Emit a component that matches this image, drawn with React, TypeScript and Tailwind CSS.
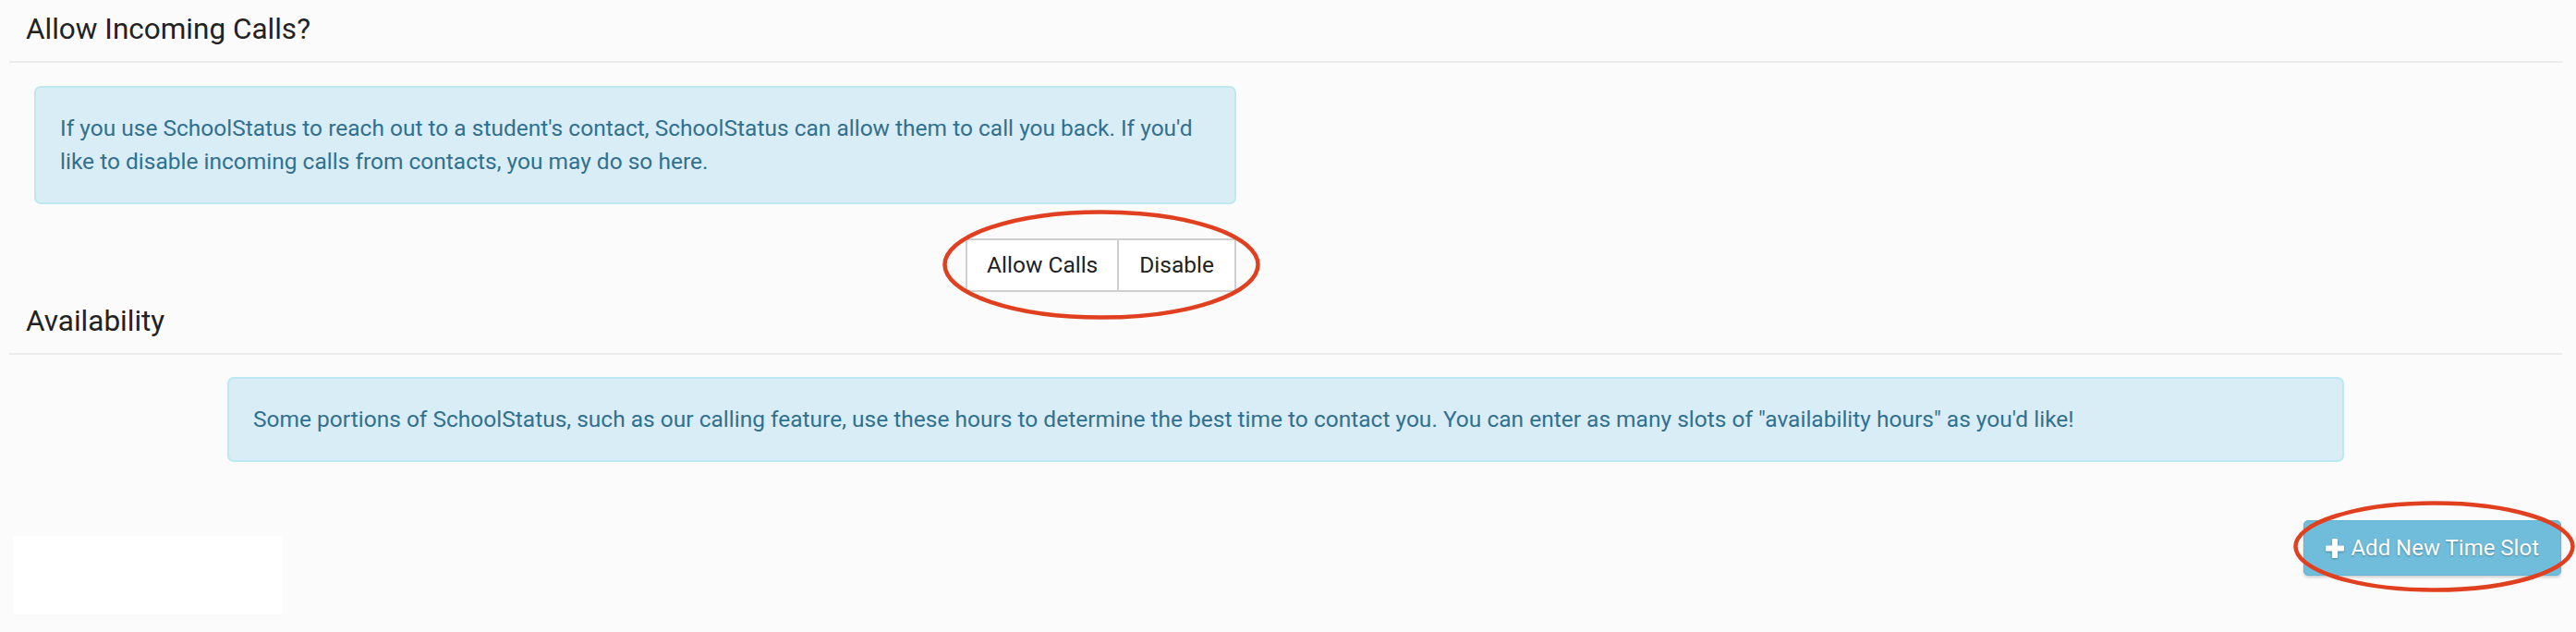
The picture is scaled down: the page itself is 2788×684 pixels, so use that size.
import React from "react";

const Ring = ({ className, w, h }: { className: string; w: number; h: number }) => (
  <svg
    className={"absolute pointer-events-none " + className}
    width={w}
    height={h}
    viewBox={`0 0 ${w} ${h}`}
  >
    <ellipse
      cx={w / 2}
      cy={h / 2}
      rx={w / 2 - 2.5}
      ry={h / 2 - 2.5}
      fill="none"
      stroke="#e0401f"
      strokeWidth="4.5"
    />
  </svg>
);

const Heading = ({ children, className = "" }: { children: React.ReactNode; className?: string }) => (
  <h2
    className={
      "pl-[18px] pb-[17px] border-b-2 border-[#ececec] text-[31.5px] leading-[35px] text-[#222] " +
      className
    }
  >
    {children}
  </h2>
);

const App = () => {
  return (
    <div className="h-[684px] bg-[#fbfbfb] font-['Roboto',sans-serif] pl-[10px] pr-[15px] overflow-hidden">
      <Heading className="pt-[14px]">Allow Incoming Calls?</Heading>

      <div className="pl-[27px] mt-[25px] w-[1328px]">
        <div className="rounded-[7px] border-2 border-[#bce8f1] bg-[#d9edf7] p-[26px] text-[24.5px] leading-[36px] text-[#31708f]">
          If you use SchoolStatus to reach out to a student's contact, SchoolStatus can allow them to call you
          back. If you'd
          <br />
          like to disable incoming calls from contacts, you may do so here.
        </div>

        <div className="mt-[37px] flex justify-end">
          <div className="relative flex h-[58px] text-[24.5px] text-[#222]">
            <button className="bg-white border-2 border-[#cfcfcf] rounded-l-[2px] px-[21px]">Allow Calls</button>
            <button className="bg-white border-2 border-l-0 border-[#cfcfcf] rounded-r-[2px] px-[22px]">
              Disable
            </button>
            <Ring className="-left-[25px] -top-[31px]" w={344} h={119} />
          </div>
        </div>
      </div>

      <Heading className="mt-[14px]">Availability</Heading>

      <div className="mt-[24px] mx-auto w-[2291px] rounded-[7px] border-2 border-[#bce8f1] bg-[#d9edf7] p-[26px] text-[24.5px] leading-[36px] text-[#31708f]">
        Some portions of SchoolStatus, such as our calling feature, use these hours to determine the best time to
        contact you. You can enter as many slots of "availability hours" as you'd like!
      </div>

      <div className="mt-[63px] flex justify-between items-start">
        <div className="ml-[4px] mt-[17px] w-[291px] h-[85px] bg-white" />
        <div className="relative mr-[1px]">
          <button className="flex items-center gap-[7px] h-[60px] px-[23px] rounded-[5px] bg-[#6fbddb] border border-[#62b3d4] text-white text-[24px] shadow-[0_2px_3px_rgba(0,0,0,0.18)] [text-shadow:0_1px_2px_rgba(0,0,0,0.3)]">
            <svg width="20" height="21" viewBox="0 0 20 21" className="drop-shadow-[0_1px_1px_rgba(0,0,0,0.3)]">
              <rect x="0" y="7.5" width="20" height="6" rx="1" fill="#fff" />
              <rect x="7" y="0" width="6" height="21" rx="1" fill="#fff" />
            </svg>
            Add New Time Slot
          </button>
          <Ring className="-left-[11px] -top-[21px]" w={305} h={99} />
        </div>
      </div>
    </div>
  );
};

export default App;
